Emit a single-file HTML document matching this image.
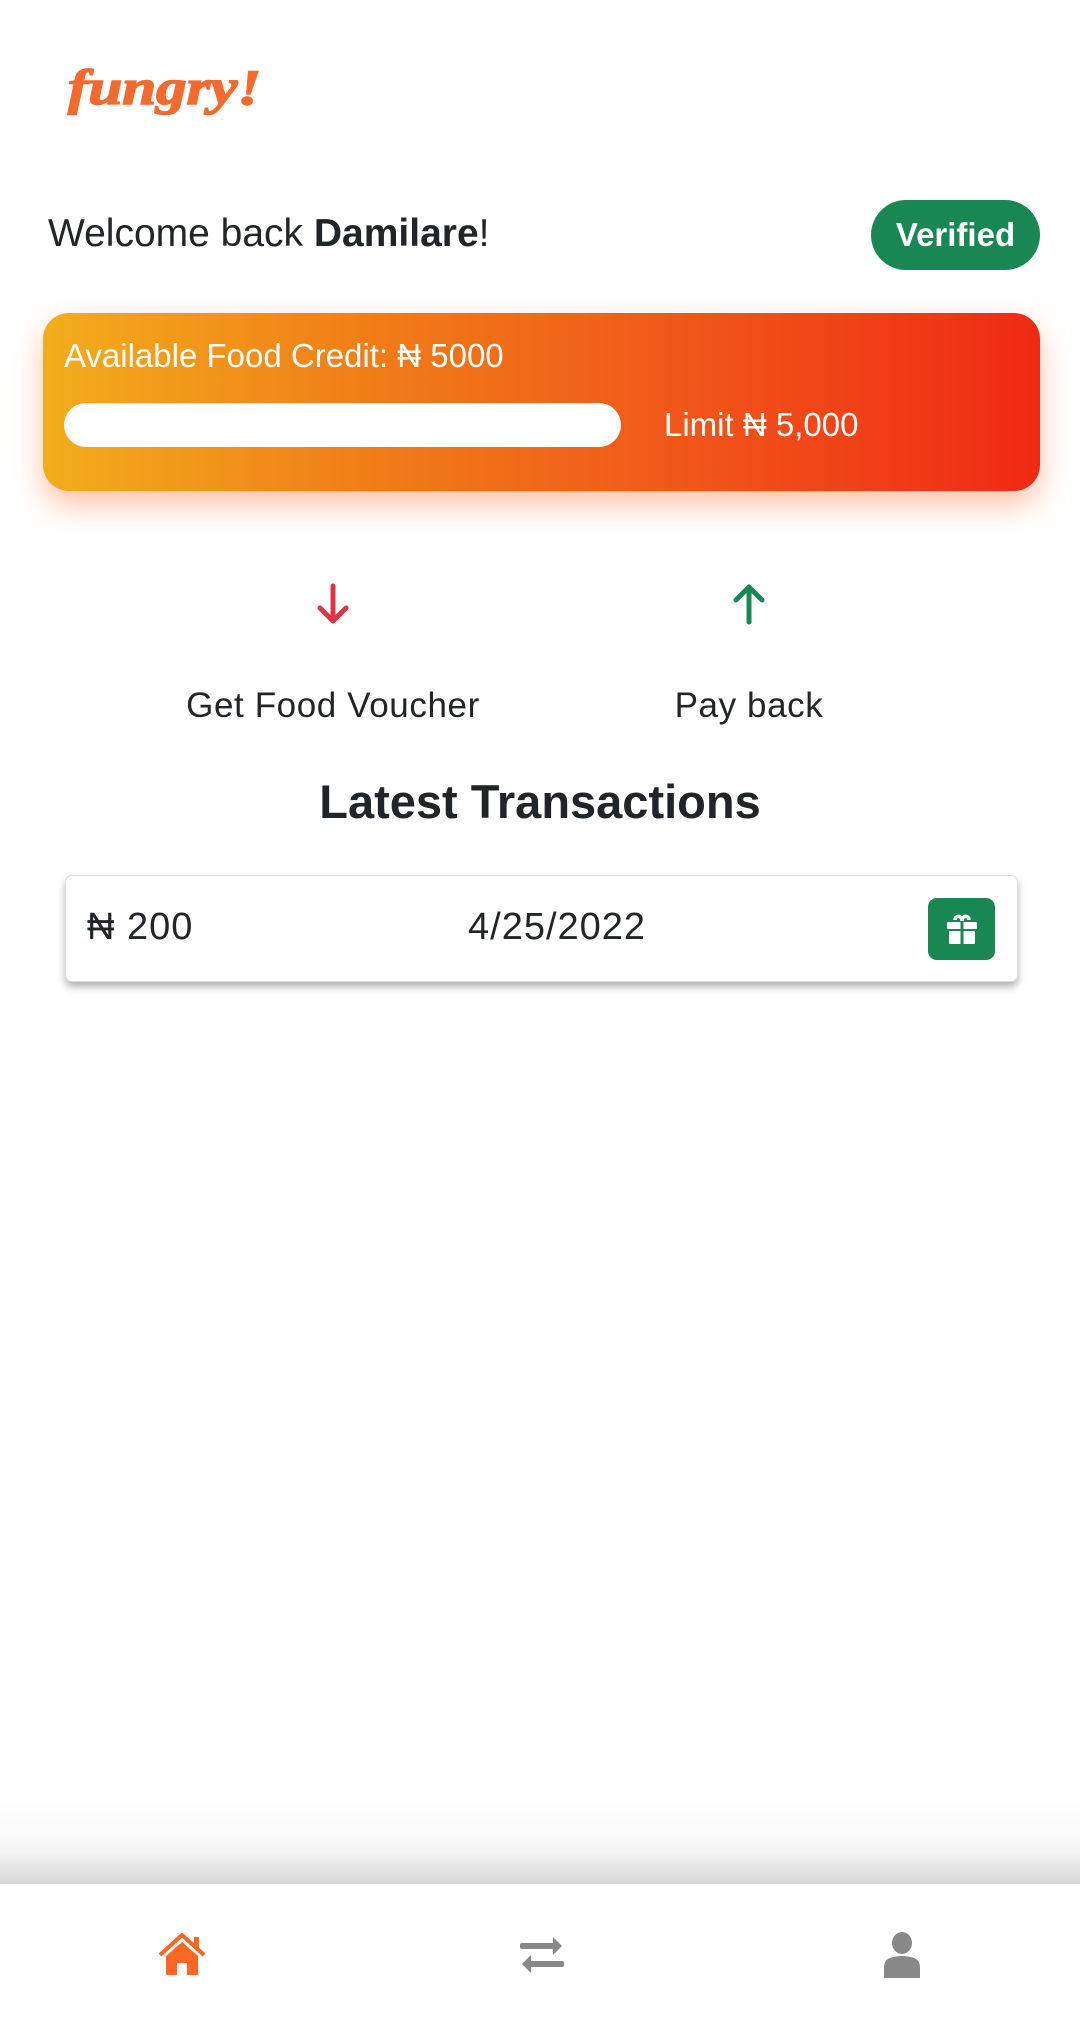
<!DOCTYPE html>
<html><head><meta charset="utf-8"><style>
*{margin:0;padding:0;box-sizing:border-box}
body{width:1080px;height:2025px;background:#fff;position:relative;overflow:hidden;font-family:"Liberation Sans",sans-serif;color:#212529}
.abs{position:absolute}
.logo{left:68px;top:58px;font-family:"Liberation Serif",serif;font-weight:bold;font-style:italic;font-size:50px;color:#f26a2e;transform:scaleX(1.22);transform-origin:left top;-webkit-text-stroke:1.5px #f26a2e}
.welcome{left:48px;top:212px;font-size:39px}
.pill{left:871px;top:200px;width:169px;height:70px;border-radius:35px;background:#198754;color:#fff;font-weight:bold;font-size:33px;display:flex;align-items:center;justify-content:center}
.card{left:43px;top:313px;width:997px;height:178px;border-radius:26px;background:linear-gradient(90deg,#f2ad1c 0%,#f07a18 35%,#f0561a 65%,#ef2a14 100%);box-shadow:0 14px 30px rgba(255,120,60,.45)}
.avail{left:64px;top:337px;color:#fff;font-size:33px}
.bar{left:64px;top:403px;width:557px;height:44px;border-radius:22px;background:#fff}
.limit{left:664px;top:406px;color:#fff;font-size:33px}
.lbl{top:686px;font-size:35px;width:440px;text-align:center;letter-spacing:.6px}
.lt{left:0;width:1080px;top:774px;text-align:center;font-weight:bold;font-size:47px}
.tx{left:65px;top:875px;width:953px;height:107px;border-radius:7px;border:1px solid #dcdcdc;box-shadow:0 5px 8px rgba(0,0,0,.3);background:#fff}
.tt{top:906px;font-size:38px;letter-spacing:1px}
.gift{left:928px;top:898px;width:67px;height:62px;border-radius:9px;background:#198754;display:flex;align-items:center;justify-content:center}
.shade{left:0;top:1800px;width:1080px;height:84px;background:linear-gradient(#fff,#f6f6f6 60%,#d6d6d6)}
</style></head><body>
<div class="abs logo">fungry!</div>
<div class="abs welcome">Welcome back <b>Damilare</b>!</div>
<div class="abs pill">Verified</div>
<div class="abs card"></div>
<div class="abs avail">Available Food Credit: ₦ 5000</div>
<div class="abs bar"></div>
<div class="abs limit">Limit ₦ 5,000</div>
<svg class="abs" style="left:313px;top:583px" width="40" height="42" viewBox="0 0 40 42"><path d="M20 3V38M7 25L20 38L33 25" stroke="#dc3545" stroke-width="5" fill="none" stroke-linecap="round" stroke-linejoin="round"/></svg>
<svg class="abs" style="left:729px;top:583px" width="40" height="42" viewBox="0 0 40 42"><path d="M20 39V4M7 17L20 4L33 17" stroke="#198754" stroke-width="5" fill="none" stroke-linecap="round" stroke-linejoin="round"/></svg>
<div class="abs lbl" style="left:113px">Get Food Voucher</div>
<div class="abs lbl" style="left:529px">Pay back</div>
<div class="abs lt">Latest Transactions</div>
<div class="abs tx"></div>
<div class="abs tt" style="left:87px">₦ 200</div>
<div class="abs tt" style="left:468px">4/25/2022</div>
<div class="abs gift"><svg width="36" height="36" viewBox="0 0 36 36"><path d="M11 9c0-5 7-5 7 1c0-6 7-6 7-1" stroke="#fff" stroke-width="3.5" fill="none"/><rect x="3" y="11" width="30" height="7" rx="1" fill="#fff"/><rect x="5" y="20" width="26" height="13" rx="1" fill="#fff"/><rect x="16.5" y="11" width="3" height="22" fill="#198754"/></svg></div>
<div class="abs shade"></div>
<svg class="abs" style="left:157px;top:1933px" width="50" height="44" viewBox="0 0 50 44"><path d="M3 22L25 2L47 22" stroke="#fd6722" stroke-width="4" fill="none"/><rect x="37" y="4" width="5" height="12" fill="#fd6722"/><path d="M9 23L25 9L41 23V42H30V30H20V42H9Z" fill="#fd6722"/></svg>
<svg class="abs" style="left:519px;top:1936px" width="46" height="38" viewBox="0 0 46 38"><rect x="1" y="7" width="36" height="6" rx="2" fill="#888"/><path d="M34 1L43 10L34 19Z" fill="#888"/><rect x="9" y="25" width="36" height="6" rx="2" fill="#888"/><path d="M12 19L3 28L12 37Z" fill="#888"/></svg>
<svg class="abs" style="left:882px;top:1932px" width="40" height="46" viewBox="0 0 40 46"><ellipse cx="20" cy="11" rx="10" ry="11" fill="#888"/><path d="M8 26Q20 22 32 26Q38 28 38 36V46H2V36Q2 28 8 26Z" fill="#888"/></svg>
</body></html>
